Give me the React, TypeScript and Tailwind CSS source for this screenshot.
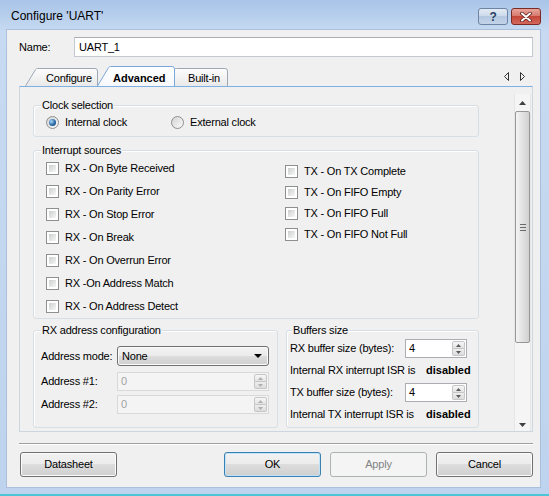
import React from 'react';

const FONT = "font-['Liberation_Sans',Arial,sans-serif]";

function CheckBox() {
  return (
    <span className="block w-[13px] h-[13px] shrink-0 border border-[#8e8f8f] bg-white p-[2px]">
      <span className="block w-full h-full bg-gradient-to-br from-[#cdcecf] to-[#f7f7f7]" />
    </span>
  );
}

function Radio({ checked }: { checked?: boolean }) {
  return (
    <span className="flex items-center justify-center w-[13px] h-[13px] shrink-0 rounded-full border border-[#8e8f8f] bg-gradient-to-br from-[#d3d3d3] to-[#fbfbfb]">
      {checked && (
        <span className="block w-[7px] h-[7px] rounded-full bg-[radial-gradient(circle_at_35%_35%,#a9d8f8,#2a6aa8_55%,#0e3a6c)]" />
      )}
    </span>
  );
}

function Group({
  label,
  labelLeft = 'left-[7px]',
  className,
  children,
}: {
  label: string;
  labelLeft?: string;
  className: string;
  children?: React.ReactNode;
}) {
  return (
    <div className={`relative border border-[#d5dfe5] rounded-[3px] shadow-[inset_1px_1px_0_#fff] ${className}`}>
      <span className={`absolute -top-[8px] ${labelLeft} px-[1px] bg-[#f0f0f0] leading-[14px]`}>{label}</span>
      {children}
    </div>
  );
}

function Tri({ dir, color = '#404040' }: { dir: 'up' | 'down'; color?: string }) {
  return (
    <svg width="7" height="4" viewBox="0 0 7 4">
      <path d={dir === 'up' ? 'M0 4 L3.5 0 L7 4 Z' : 'M0 0 L7 0 L3.5 4 Z'} fill={color} />
    </svg>
  );
}

function SmallTri({ dir, color }: { dir: 'up' | 'down'; color: string }) {
  return (
    <svg width="5" height="3" viewBox="0 0 5 3">
      <path d={dir === 'up' ? 'M0 3 L2.5 0 L5 3 Z' : 'M0 0 L5 0 L2.5 3 Z'} fill={color} />
    </svg>
  );
}

function SpinBox({ value, disabled, className }: { value: string; disabled?: boolean; className: string }) {
  const arrow = disabled ? '#b0b0b0' : '#5a5a5a';
  return (
    <div
      className={`flex border ${
        disabled ? 'border-[#d9d9d9] bg-[#f4f4f4] text-[#a3a3a3]' : 'border-[#abadb3] bg-white'
      } ${className}`}
    >
      <span className="flex-1 pl-[3px] leading-[16px]">{value}</span>
      <div className="w-[13px] flex flex-col my-[1px] mr-[1px]">
        <div className="flex-1 flex items-center justify-center border border-[#c6c6c6] rounded-t-[2px] bg-gradient-to-b from-[#f7f7f7] to-[#e3e3e3]">
          <SmallTri dir="up" color={arrow} />
        </div>
        <div className="flex-1 flex items-center justify-center border border-t-0 border-[#c6c6c6] rounded-b-[2px] bg-gradient-to-b from-[#eeeeee] to-[#dcdcdc]">
          <SmallTri dir="down" color={arrow} />
        </div>
      </div>
    </div>
  );
}

function Button({ label, primary, disabled }: { label: string; primary?: boolean; disabled?: boolean }) {
  const look = disabled
    ? 'border-[#adb2b5] bg-[#f4f4f4] text-[#838383]'
    : primary
    ? 'border-[#3c7fb1] bg-[linear-gradient(#f2f2f2,#ebebeb_50%,#dddddd_50%,#cfcfcf)] shadow-[inset_0_0_0_1px_#bfe3f8]'
    : 'border-[#707070] bg-[linear-gradient(#f2f2f2,#ebebeb_50%,#dddddd_50%,#cfcfcf)] shadow-[inset_0_0_0_1px_#fcfcfc]';
  return (
    <div className={`w-[97px] h-[25px] flex items-center justify-center border rounded-[3px] ${look}`}>{label}</div>
  );
}

const leftChecks = [
  'RX - On Byte Received',
  'RX - On Parity Error',
  'RX - On Stop Error',
  'RX - On Break',
  'RX - On Overrun Error',
  'RX -On Address Match',
  'RX - On Address Detect',
];

const rightChecks = ['TX - On TX Complete', 'TX - On FIFO Empty', 'TX - On FIFO Full', 'TX - On FIFO Not Full'];

export default function App() {
  return (
    <div
      className={`${FONT} text-[11px] tracking-[-0.2px] text-black w-[549px] h-[496px] flex flex-col overflow-hidden bg-[linear-gradient(#a8c4e8,#c7daf1_32px,#bed3ed)]`}
    >
      {/* title bar */}
      <div className="h-[29px] shrink-0 flex items-start">
        <span className="pl-[11px] pt-[9px] text-[12px] leading-[14px] tracking-normal">Configure 'UART'</span>
        <div className="ml-auto mt-[8px] mr-[8px] flex gap-[3px]">
          <div className="w-[30px] h-[17px] flex items-center justify-center rounded-[3px] border border-[#6d84a4] bg-[linear-gradient(#e3ebf5,#cad8ea_50%,#b4c8e0_50%,#c3d4e9)] text-[12px] font-bold leading-none text-[#2b3f5e]">
            ?
          </div>
          <div className="w-[30px] h-[17px] flex items-center justify-center rounded-[3px] border border-[#7b2b24] bg-[linear-gradient(#e8a59c,#d6756a_50%,#c4473a_50%,#d3695c)]">
            <svg width="12" height="10" viewBox="0 0 12 10">
              <path d="M2 1.5 L10 8.5 M10 1.5 L2 8.5" stroke="#5b1f1a" strokeWidth="3.6" strokeLinecap="round" />
              <path d="M2 1.5 L10 8.5 M10 1.5 L2 8.5" stroke="#fff" strokeWidth="2" strokeLinecap="round" />
            </svg>
          </div>
        </div>
      </div>

      {/* client area */}
      <div className="ml-[6px] w-[535px] h-[459px] shrink-0 bg-[#f0f0f0] border border-[#a9bfdb] pl-[12px] flex flex-col">
        {/* name */}
        <div className="mt-[7px] h-[20px] flex items-center">
          <span className="w-[55px]">Name:</span>
          <div className="w-[459px] h-full border border-[#c5cad2] border-t-[#abadb3] bg-white pl-[4px] flex items-center">
            UART_1
          </div>
        </div>

        {/* tab strip */}
        <div className="mt-[9px] w-[514px] h-[20px] flex items-end pl-[6px]">
          <div className="relative w-[73px] h-[18px] z-0">
            <svg className="absolute inset-0" width="73" height="18" viewBox="0 0 73 18">
              <defs>
                <linearGradient id="tabA" x1="0" y1="0" x2="0" y2="1">
                  <stop offset="0" stopColor="#fdfdfd" />
                  <stop offset="1" stopColor="#e9e9e9" />
                </linearGradient>
              </defs>
              <path d="M0.5 18 L10.5 1.6 Q11.2 0.5 12.5 0.5 H70 Q72.5 0.5 72.5 3 V18" fill="url(#tabA)" stroke="#9ea9b6" />
            </svg>
            <span className="relative block pl-[21px] pt-[3px] leading-[14px]">Configure</span>
          </div>
          <div className="relative w-[78px] h-[20px] -ml-[1px] z-10">
            <svg className="absolute inset-0" width="78" height="20" viewBox="0 0 78 20">
              <defs>
                <linearGradient id="tabB" x1="0" y1="0" x2="0" y2="1">
                  <stop offset="0" stopColor="#ffffff" />
                  <stop offset="1" stopColor="#f6f8fb" />
                </linearGradient>
              </defs>
              <path d="M0.5 20 L11.5 1.6 Q12.2 0.5 13.5 0.5 H75 Q77.5 0.5 77.5 3 V20" fill="url(#tabB)" stroke="#7aa8da" />
            </svg>
            <span className="relative block pl-[16px] pt-[5px] leading-[14px] font-bold tracking-normal">Advanced</span>
          </div>
          <div className="relative w-[64px] h-[18px] -ml-[11px] z-0">
            <svg className="absolute inset-0" width="64" height="18" viewBox="0 0 64 18">
              <defs>
                <linearGradient id="tabC" x1="0" y1="0" x2="0" y2="1">
                  <stop offset="0" stopColor="#fdfdfd" />
                  <stop offset="1" stopColor="#e9e9e9" />
                </linearGradient>
              </defs>
              <path d="M0.5 18 L10.5 1.6 Q11.2 0.5 12.5 0.5 H61 Q63.5 0.5 63.5 3 V18" fill="url(#tabC)" stroke="#9ea9b6" />
            </svg>
            <span className="relative block pl-[24px] pt-[3px] leading-[14px]">Built-in</span>
          </div>
          <div className="ml-auto mr-[8px] self-center flex gap-[11px]">
            <svg width="5" height="9" viewBox="0 0 5 9">
              <path d="M4.5 0.5 L0.5 4.5 L4.5 8.5 Z" fill="none" stroke="#333" />
            </svg>
            <svg width="5" height="9" viewBox="0 0 5 9">
              <path d="M0.5 0.5 L4.5 4.5 L0.5 8.5 Z" fill="none" stroke="#333" />
            </svg>
          </div>
        </div>

        {/* tab panel */}
        <div className="w-[514px] h-[346px] border border-[#cdd5de] border-t-[#7eb0e4] bg-[#f0f0f0] flex">
          <div className="flex-1 overflow-hidden pl-[13px] pt-[18px]">
            <Group label="Clock selection" className="w-[446px] h-[32px]">
              <div className="flex items-center pt-[10px] pl-[12px]">
                <div className="w-[125px] flex items-center gap-[6px]">
                  <Radio checked />
                  <span className="leading-[13px]">Internal clock</span>
                </div>
                <div className="flex items-center gap-[6px]">
                  <Radio />
                  <span className="leading-[13px]">External clock</span>
                </div>
              </div>
            </Group>

            <Group label="Interrupt sources" className="mt-[13px] w-[446px] h-[169px]">
              <div className="flex">
                <div className="w-[251px] pl-[12px] pt-[6px]">
                  {leftChecks.map((t) => (
                    <div key={t} className="h-[23px] flex items-center gap-[6px]">
                      <CheckBox />
                      <span>{t}</span>
                    </div>
                  ))}
                </div>
                <div className="pt-[10px]">
                  {rightChecks.map((t) => (
                    <div key={t} className="h-[21px] flex items-center gap-[6px]">
                      <CheckBox />
                      <span>{t}</span>
                    </div>
                  ))}
                </div>
              </div>
            </Group>

            <div className="mt-[11px] flex gap-[8px]">
              <Group label="RX address configuration" className="w-[245px] h-[98px] shrink-0">
                <div className="pl-[7px] pt-[15px]">
                  <div className="h-[20px] flex items-center">
                    <span className="w-[76px]">Address mode:</span>
                    <div className="w-[152px] h-full flex items-center justify-between pl-[4px] pr-[6px] border border-[#707070] rounded-[3px] bg-[linear-gradient(#f2f2f2,#ebebeb_50%,#dddddd_50%,#cfcfcf)] shadow-[inset_0_0_0_1px_#fcfcfc]">
                      <span>None</span>
                      <svg width="8" height="4" viewBox="0 0 8 4">
                        <path d="M0 0 H8 L4 4 Z" fill="#000" />
                      </svg>
                    </div>
                  </div>
                  <div className="mt-[6px] h-[19px] flex items-center">
                    <span className="w-[76px]">Address #1:</span>
                    <SpinBox value="0" disabled className="w-[152px] h-full" />
                  </div>
                  <div className="mt-[4px] h-[19px] flex items-center">
                    <span className="w-[76px]">Address #2:</span>
                    <SpinBox value="0" disabled className="w-[152px] h-full" />
                  </div>
                </div>
              </Group>

              <Group label="Buffers size" labelLeft="left-[5px]" className="w-[193px] h-[98px] shrink-0">
                <div className="pl-[3px] pt-[8px]">
                  <div className="h-[19px] flex items-center">
                    <span className="w-[115px]">RX buffer size (bytes):</span>
                    <SpinBox value="4" className="w-[62px] h-full" />
                  </div>
                  <div className="mt-[5px] h-[14px] flex items-center">
                    <span className="w-[136px]">Internal RX interrupt ISR is</span>
                    <span className="font-bold tracking-normal">disabled</span>
                  </div>
                  <div className="mt-[6px] h-[19px] flex items-center">
                    <span className="w-[115px]">TX buffer size (bytes):</span>
                    <SpinBox value="4" className="w-[62px] h-full" />
                  </div>
                  <div className="mt-[5px] h-[14px] flex items-center">
                    <span className="w-[136px]">Internal TX interrupt ISR is</span>
                    <span className="font-bold tracking-normal">disabled</span>
                  </div>
                </div>
              </Group>
            </div>
          </div>

          {/* scrollbar */}
          <div className="w-[17px] mr-[1px] mt-[7px] flex flex-col bg-[#f5f5f5] border-x border-[#e6e6e6]">
            <div className="h-[17px] flex items-start justify-center pt-[7px]">
              <Tri dir="up" />
            </div>
            <div className="h-[232px] rounded-[2px] border border-[#979797] bg-[linear-gradient(90deg,#f4f4f4,#dedede_60%,#d0d0d0)] flex flex-col items-center justify-center gap-[2px]">
              <span className="block w-[6px] h-[1px] bg-[#6a6a6a]" />
              <span className="block w-[6px] h-[1px] bg-[#6a6a6a]" />
              <span className="block w-[6px] h-[1px] bg-[#6a6a6a]" />
            </div>
            <div className="flex-1" />
            <div className="h-[17px] flex items-end justify-center pb-[4px]">
              <Tri dir="down" />
            </div>
          </div>
        </div>

        {/* separator */}
        <div className="mt-[11px] w-[514px] h-[2px] border-t border-t-[#a0a0a0] border-b border-b-white" />

        {/* buttons */}
        <div className="mt-[7px] w-[514px] flex">
          <div className="ml-[1px]">
            <Button label="Datasheet" />
          </div>
          <div className="ml-auto flex gap-[9px]">
            <Button label="OK" primary />
            <Button label="Apply" disabled />
            <Button label="Cancel" />
          </div>
        </div>
      </div>

      <div className="flex-1" />
      <div className="h-[2px] bg-[#4cc6d6]" />
    </div>
  );
}
